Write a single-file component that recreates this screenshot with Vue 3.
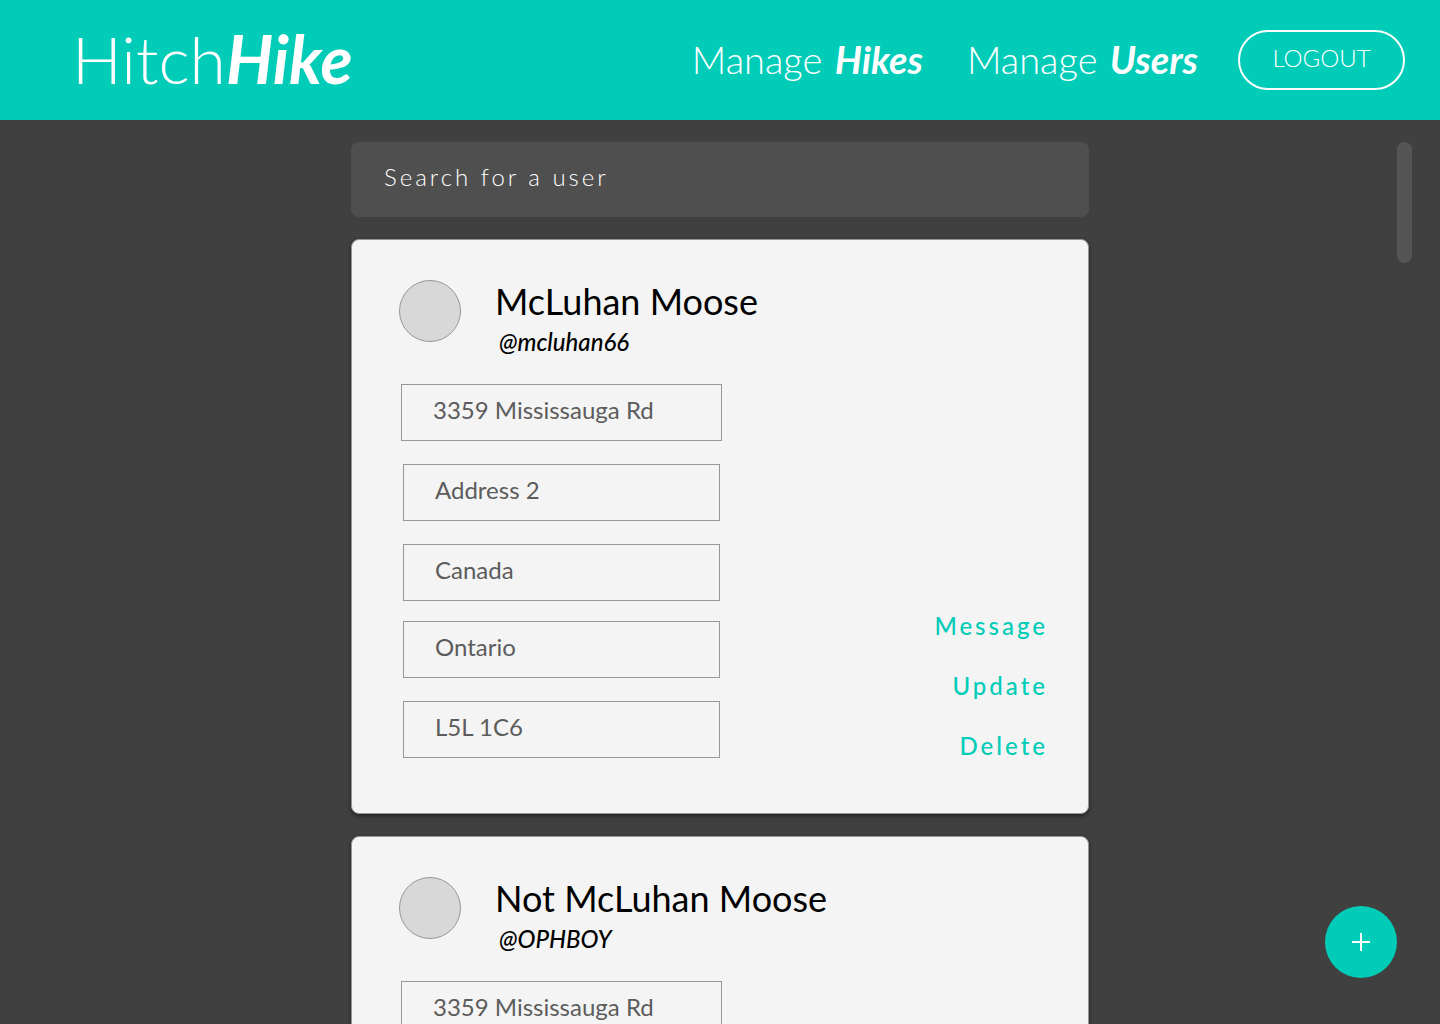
<script setup>
import { ref } from 'vue'

const query = ref('')

const users = ref([
  {
    id: 1,
    name: 'McLuhan Moose',
    handle: '@mcluhan66',
    address1: '3359 Mississauga Rd',
    address2: 'Address 2',
    country: 'Canada',
    province: 'Ontario',
    postal: 'L5L 1C6',
  },
  {
    id: 2,
    name: 'Not McLuhan Moose',
    handle: '@OPHBOY',
    address1: '3359 Mississauga Rd',
    address2: 'Address 2',
    country: 'Canada',
    province: 'Ontario',
    postal: 'L5L 1C6',
  },
])
</script>

<template>
  <div class="app">
    <header class="topbar">
      <a class="logo" href="#">Hitch<b>Hike</b></a>
      <nav class="nav">
        <div class="links">
          <a href="#">Manage <b>Hikes</b></a>
          <a href="#">Manage <b>Users</b></a>
        </div>
        <button class="logout" type="button">LOGOUT</button>
      </nav>
    </header>

    <main class="content">
      <div class="column">
        <input v-model="query" class="search" type="search" placeholder="Search for a user" aria-label="Search for a user" />

        <article v-for="user in users" :key="user.id" class="card">
          <div class="profile">
            <span class="avatar"></span>
            <div class="identity">
              <h2 class="name">{{ user.name }}</h2>
              <p class="handle">{{ user.handle }}</p>
            </div>
          </div>
          <div class="details">
            <form class="fields" @submit.prevent>
              <input v-model="user.address1" class="field wide" type="text" aria-label="Address line 1" />
              <input v-model="user.address2" class="field" type="text" aria-label="Address line 2" />
              <div class="region">
                <input v-model="user.country" class="field" type="text" aria-label="Country" />
                <input v-model="user.province" class="field" type="text" aria-label="Province" />
              </div>
              <input v-model="user.postal" class="field" type="text" aria-label="Postal code" />
            </form>
            <div class="actions">
              <button type="button">Message</button>
              <button type="button">Update</button>
              <button type="button">Delete</button>
            </div>
          </div>
        </article>
      </div>
      <span class="scroll-thumb"></span>
    </main>

    <button class="add" type="button" aria-label="Add user">
      <svg width="20" height="20" viewBox="0 0 20 20" aria-hidden="true">
        <path d="M10 1v18M1 10h18" fill="none" stroke="#fff" stroke-width="2" />
      </svg>
    </button>
  </div>
</template>

<style>
body {
  background: #404040;
}
</style>

<style scoped>
.app {
  position: relative;
  display: flex;
  flex-direction: column;
  height: 100vh;
  overflow: hidden;
  background: #404040;
  font-family: Lato, 'Open Sans', sans-serif;
  font-weight: 300;
}

.app * {
  box-sizing: border-box;
}

button,
input {
  font: inherit;
  font-size: 24px;
}

button {
  cursor: pointer;
}

.topbar {
  display: flex;
  flex: none;
  align-items: center;
  justify-content: space-between;
  height: 120px;
  padding: 0 35px 0 72px;
  background: #00ccb8;
}

.topbar a {
  padding-bottom: 2px;
  color: #fff;
  text-decoration: none;
  white-space: nowrap;
}

.topbar b {
  font-style: italic;
  font-weight: 700;
}

.logo {
  font-size: 66px;
  line-height: 76px;
}

.nav {
  display: flex;
  align-items: center;
  gap: 40px;
}

.links {
  display: flex;
  gap: 44px;
  font-size: 38px;
  line-height: 44px;
}

.links b {
  margin-left: 2px;
}

.logout {
  width: 167px;
  height: 60px;
  padding: 0 0 6px;
  border: 2px solid #fff;
  border-radius: 30px;
  background: none;
  color: #fff;
}

.content {
  position: relative;
  flex: 1;
  min-height: 0;
  overflow-y: auto;
  padding: 22px 0;
  scrollbar-width: none;
}

.column {
  display: flex;
  flex-direction: column;
  gap: 22px;
  max-width: 738px;
  margin: 0 auto;
}

.search {
  width: 100%;
  height: 75px;
  padding: 0 33px 6px;
  border: 0;
  border-radius: 8px;
  outline: 0;
  background: #4f4f4f;
  color: #fff;
  letter-spacing: 3px;
  appearance: none;
}

.search::placeholder {
  color: #fff;
  opacity: 1;
}

.card {
  padding: 40px 40px 55px 47px;
  border: 1px solid #979797;
  border-radius: 8px;
  background: #f4f4f4;
  box-shadow: 0 2px 4px rgba(0, 0, 0, 0.5);
}

.profile {
  display: flex;
  gap: 34px;
}

.avatar {
  flex: none;
  width: 62px;
  height: 62px;
  border: 1px solid #979797;
  border-radius: 50%;
  background: #d8d8d8;
}

.name {
  margin: 0;
  font-size: 36px;
  font-weight: 400;
  line-height: 42px;
  color: #000;
}

.handle {
  margin: 0 0 0 4px;
  font-size: 24px;
  font-style: italic;
  font-weight: 500;
  line-height: 40px;
  color: #000;
}

.details {
  display: flex;
  align-items: flex-end;
  justify-content: space-between;
  margin-top: 22px;
  padding-left: 2px;
}

.fields {
  display: flex;
  flex-direction: column;
  align-items: center;
  gap: 23px;
}

.region {
  display: flex;
  flex-direction: column;
  gap: 20px;
}

.field {
  width: 317px;
  height: 57px;
  padding: 0 31px 6px;
  border: 1px solid #979797;
  border-radius: 0;
  outline: 0;
  background: none;
  color: #5c5c5c;
  font-weight: 400;
}

.field.wide {
  width: 321px;
}

.actions {
  display: flex;
  flex-direction: column;
  align-items: flex-end;
  gap: 36px;
}

.actions button {
  padding: 0;
  border: 0;
  background: none;
  color: #00ccb8;
  font-weight: 500;
  line-height: 24px;
  letter-spacing: 3px;
}

.scroll-thumb {
  position: absolute;
  top: 22px;
  right: 28px;
  width: 15px;
  height: 121px;
  border-radius: 8px;
  background: #555;
}

.add {
  position: absolute;
  right: 43px;
  bottom: 46px;
  display: grid;
  place-items: center;
  width: 72px;
  height: 72px;
  padding: 0;
  border: 0;
  border-radius: 50%;
  background: #00ccb8;
}
</style>
